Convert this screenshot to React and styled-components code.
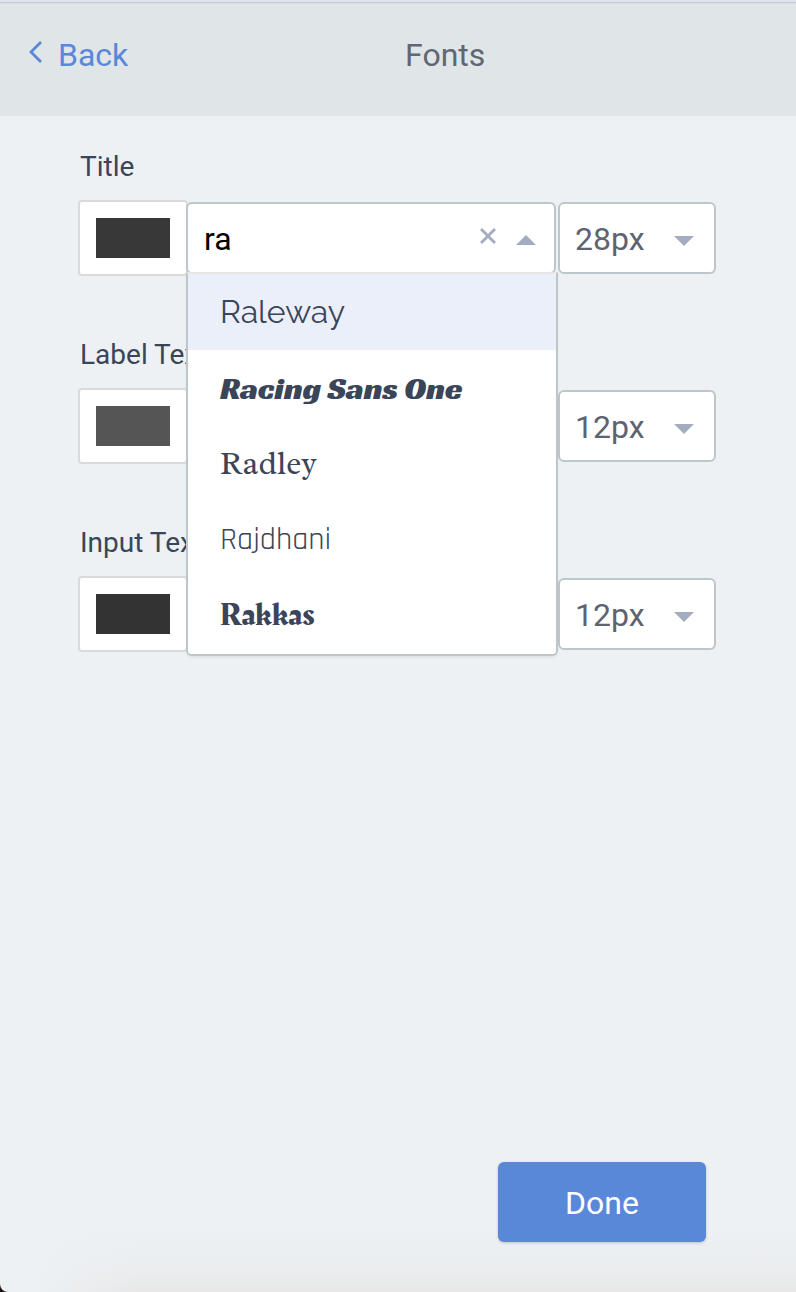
import React, { useState } from "react";
import styled, { createGlobalStyle } from "styled-components";

const GlobalStyle = createGlobalStyle`
  *, *::before, *::after { box-sizing: border-box; }
  body {
    margin: 0;
    background: #1e1414;
    font-family: Roboto, "Liberation Sans", sans-serif;
  }
  input, select, button { font-family: inherit; }
`;

const Page = styled.div`
  display: flex;
  flex-direction: column;
  min-height: 100vh;
  overflow: hidden;
  border-bottom-left-radius: 8px;
  background:
    linear-gradient(to right, #edf1f4 32px, rgba(237, 241, 244, 0) 140px) bottom / 100% 64px no-repeat,
    linear-gradient(to bottom, rgba(232, 232, 232, 0), rgba(232, 232, 232, 0.4) 60%, #e8e8e8) bottom / 100% 64px no-repeat,
    #edf1f4;
`;

const Header = styled.header`
  display: flex;
  align-items: center;
  height: 116px;
  padding: 0 34px 6px 28px;
  background: #e0e5e8;
  box-shadow: inset 0 2px #e0e5e8, inset 0 3px #c5cbd8, inset 0 4px #d8dde2;
`;

const BackLink = styled.a`
  display: flex;
  align-items: center;
  gap: 14px;
  color: #5a88d9;
  font-size: 32px;
  line-height: 40px;
  text-decoration: none;

  svg { margin-bottom: 6px; }
`;

const Heading = styled.h1`
  flex: 1;
  margin: 0;
  color: #606672;
  font-size: 32px;
  font-weight: 400;
  line-height: 40px;
  text-align: center;
`;

const Form = styled.form`
  display: flex;
  flex: 1;
  flex-direction: column;
  padding: 32px 80px 50px 78px;
`;

const Field = styled.div`
  display: flex;
  flex-direction: column;
  gap: 14px;
  margin-bottom: 60px;
`;

const FieldLabel = styled.label`
  padding-left: 2px;
  color: #3b4559;
  font-size: 28px;
  line-height: 38px;
`;

const Controls = styled.div`
  display: flex;
  align-items: center;
`;

const ColorInput = styled.input`
  flex: none;
  width: 110px;
  height: 76px;
  padding: 0;
  border: 2px solid #d8dadb;
  border-radius: 4px;
  background: #fff;
  appearance: none;

  &::-webkit-color-swatch-wrapper { padding: 16px; }
  &::-webkit-color-swatch { border: 0; border-radius: 0; }
`;

const Combo = styled.div`
  position: relative;
  flex: 1;
  display: flex;
  align-items: center;
  min-width: 0;
  height: 72px;
  margin: 0 2px 0 -2px;
  padding: 0 18px 0 16px;
  border: 2px solid #bdc6ca;
  border-radius: 6px;
  background: #fff;
`;

const ComboInput = styled.input`
  flex: 1;
  min-width: 0;
  height: 64px;
  padding: 2px 0 0;
  border: 0;
  outline: 0;
  background: transparent;
  color: #000;
  font-size: 32px;
`;

const ClearButton = styled.button`
  display: flex;
  padding: 0 0 4px;
  border: 0;
  background: transparent;
`;

const ToggleButton = styled.button`
  display: flex;
  margin-left: 20px;
  padding: 4px 0 0;
  border: 0;
  background: transparent;
`;

const Menu = styled.ul`
  position: absolute;
  z-index: 2;
  top: 68px;
  left: -2px;
  right: -4px;
  margin: 0;
  padding: 0;
  overflow: hidden;
  list-style: none;
  border: 2px solid #bdc6ca;
  border-top-color: #e6e6e6;
  border-radius: 0 0 6px 6px;
  background: #fff;
  box-shadow: 0 2px 2px rgba(0, 0, 0, 0.06);
`;

const Option = styled.li`
  height: 76px;
  padding-left: 32px;
  background: ${(p) => (p.$active ? "#ebeffa" : "#fff")};
  color: #3b4559;
  font-family: ${(p) => p.$family};
  font-size: 32px;
  line-height: 76px;
  white-space: nowrap;
`;

const SizeBox = styled.div`
  position: relative;
  flex: none;
  width: 158px;

  svg {
    position: absolute;
    top: 34px;
    right: 22px;
    pointer-events: none;
  }
`;

const SizeSelect = styled.select`
  display: block;
  width: 100%;
  height: 72px;
  padding: 2px 48px 0 15px;
  border: 2px solid #bdc6ca;
  border-radius: 6px;
  background: #fff;
  color: #5d6470;
  font-size: 32px;
  appearance: none;
`;

const DoneButton = styled.button`
  align-self: flex-end;
  width: 208px;
  height: 80px;
  margin: auto 10px 0 0;
  padding: 2px 0 0;
  border: 0;
  border-radius: 6px;
  background: #5a88d9;
  box-shadow: 0 1px 3px rgba(0, 0, 0, 0.2);
  color: #fff;
  font-size: 32px;
`;

const Chevron = () => (
  <svg width="16" height="24" viewBox="0 0 16 24" fill="none" stroke="currentColor" strokeWidth="2.8">
    <path d="M13 2 L3 12 L13 22" />
  </svg>
);

const Triangle = ({ up }) => (
  <svg width="20" height="10" viewBox="0 0 20 10" fill="#a3adbf">
    <path d={up ? "M0 10 L10 0 L20 10Z" : "M0 0 L10 10 L20 0Z"} />
  </svg>
);

const Cross = () => (
  <svg width="16" height="16" viewBox="0 0 16 16" fill="none" stroke="#a3adbf" strokeWidth="3">
    <path d="M1 1 L15 15 M15 1 L1 15" />
  </svg>
);

const fonts = [
  { name: "Raleway", family: 'Raleway, Lato, sans-serif' },
  { name: "Racing Sans One", family: '"Racing Sans One", Roboto, sans-serif' },
  { name: "Radley", family: 'Radley, "Liberation Serif", serif' },
  { name: "Rajdhani", family: 'Rajdhani, Roboto, sans-serif' },
  { name: "Rakkas", family: 'Rakkas, "Liberation Serif", serif' },
];

const fields = [
  { id: "title", label: "Title", color: "#383838", size: "28px", query: "ra", open: true },
  { id: "label-text", label: "Label Text", color: "#555555", size: "12px", query: "" },
  { id: "input-text", label: "Input Text", color: "#333333", size: "12px", query: "" },
];

function FontField({ id, label, color, size, query, open }) {
  const [text, setText] = useState(query);
  return (
    <Field>
      <FieldLabel htmlFor={id}>{label}</FieldLabel>
      <Controls>
        <ColorInput type="color" defaultValue={color} aria-label={`${label} color`} />
        <Combo>
          <ComboInput
            id={id}
            role="combobox"
            aria-expanded={!!open}
            value={text}
            onChange={(e) => setText(e.target.value)}
          />
          {open && (
            <>
              <ClearButton type="button" aria-label="Clear" onClick={() => setText("")}>
                <Cross />
              </ClearButton>
              <ToggleButton type="button" aria-label="Close list">
                <Triangle up />
              </ToggleButton>
              <Menu role="listbox" aria-label="Fonts">
                {fonts.map((f, i) => (
                  <Option key={f.name} role="option" aria-selected={i === 0} $active={i === 0} $family={f.family}>
                    {f.name}
                  </Option>
                ))}
              </Menu>
            </>
          )}
        </Combo>
        <SizeBox>
          <SizeSelect defaultValue={size} aria-label={`${label} size`}>
            <option>{size}</option>
          </SizeSelect>
          <Triangle />
        </SizeBox>
      </Controls>
    </Field>
  );
}

export default function App() {
  return (
    <>
      <GlobalStyle />
      <Page>
        <Header>
          <BackLink href="#back">
            <Chevron />
            Back
          </BackLink>
          <Heading>Fonts</Heading>
        </Header>
        <Form onSubmit={(e) => e.preventDefault()}>
          {fields.map((f) => (
            <FontField key={f.id} {...f} />
          ))}
          <DoneButton type="submit">Done</DoneButton>
        </Form>
      </Page>
    </>
  );
}
